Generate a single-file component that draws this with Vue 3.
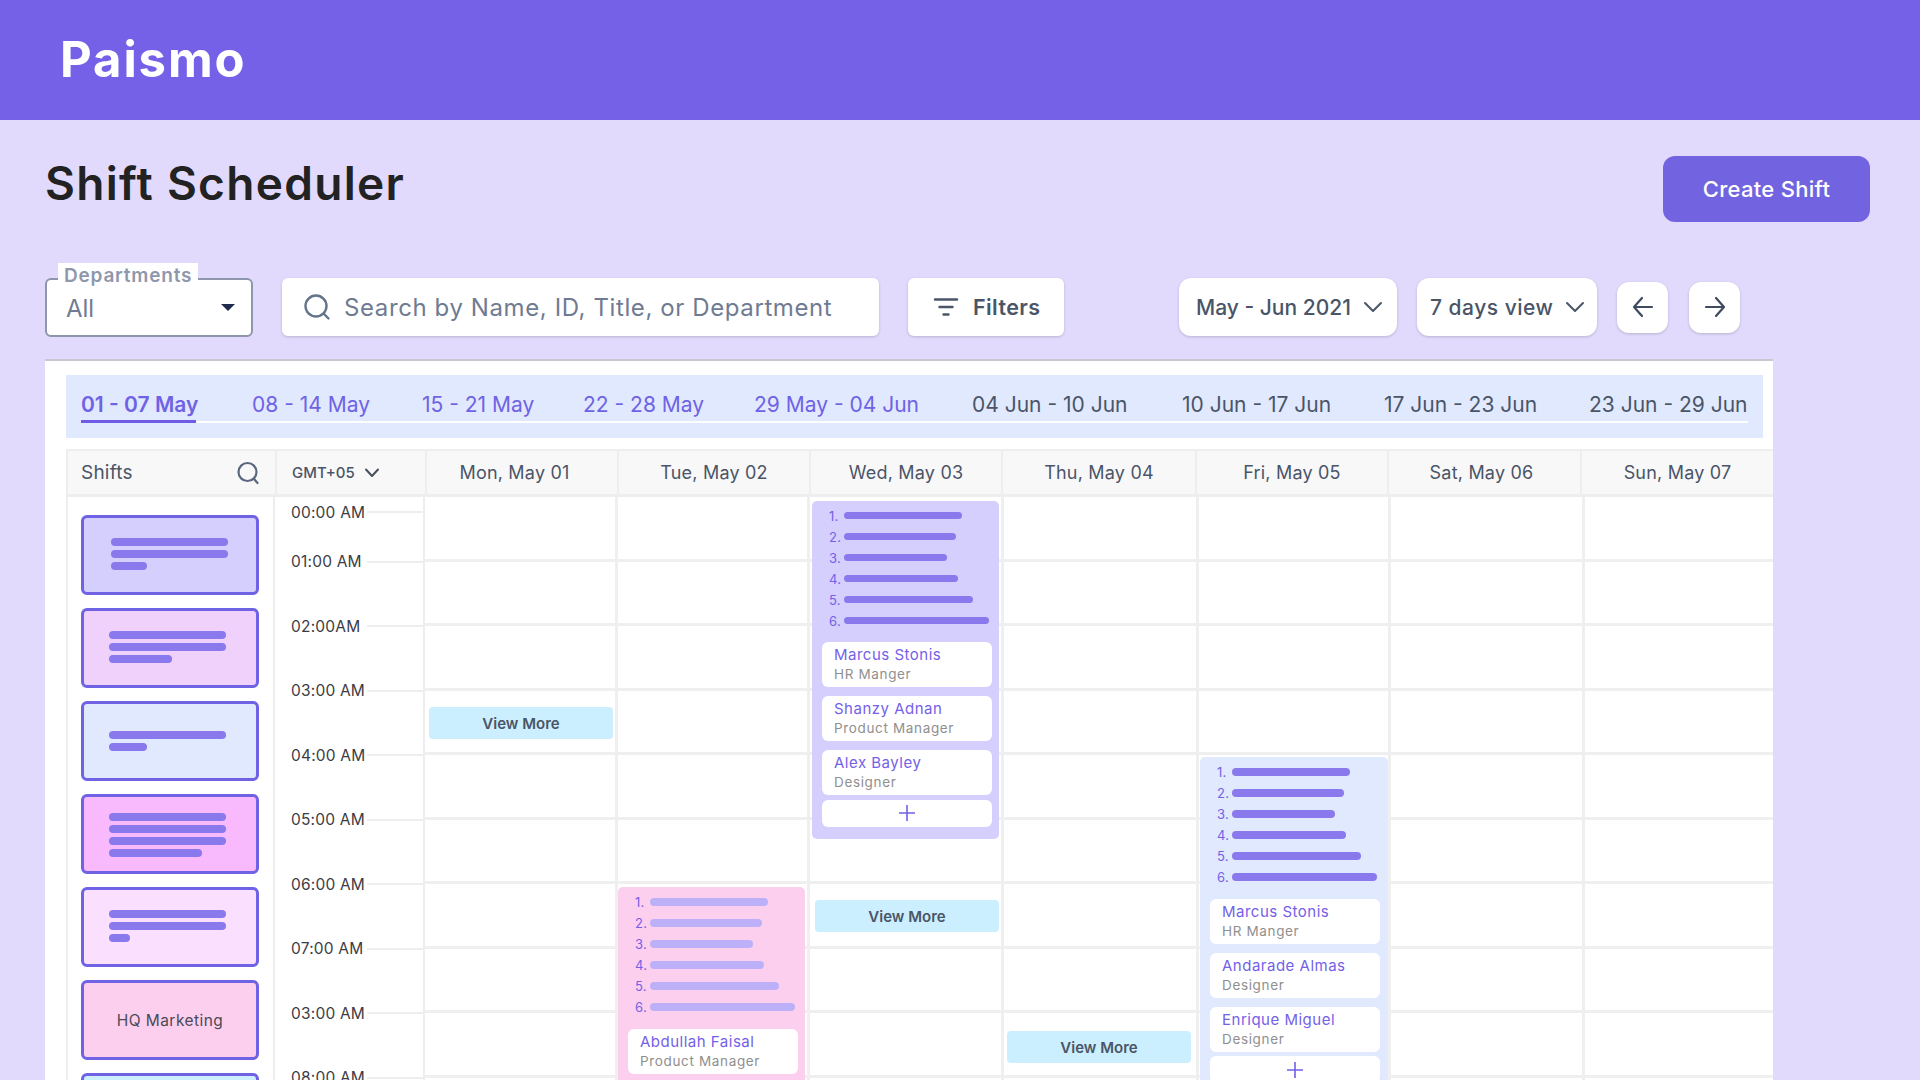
<script setup>
const tabs = [
  { label: '01 - 07 May', width: 115 },
  { label: '08 - 14 May', width: 118 },
  { label: '15 - 21 May', width: 109 },
  { label: '22 - 28 May', width: 119 },
  { label: '29 May - 04 Jun', width: 166 },
  { label: '04 Jun - 10 Jun', width: 158 },
  { label: '10 Jun - 17 Jun', width: 150 },
  { label: '17 Jun - 23 Jun', width: 153 },
  { label: '23 Jun - 29 Jun', width: 156 },
]
const times = ['00:00 AM', '01:00 AM', '02:00AM', '03:00 AM', '04:00 AM', '05:00 AM', '06:00 AM', '07:00 AM', '03:00 AM', '08:00 AM']
const barWidths = [118, 112, 103, 114, 129, 145]

const shifts = [
  { bg: '#d4cffd', lines: [117, 117, 36], pad: 27 },
  { bg: '#f0d1fc', lines: [117, 117, 63], pad: 25 },
  { bg: '#e1e9fe', lines: [117, 38], pad: 25, top: 27 },
  { bg: '#f9b9fd', lines: [117, 117, 117, 93], pad: 25, top: 16 },
  { bg: '#fadffe', lines: [117, 117, 21], pad: 25 },
  { bg: '#fdcfee', label: 'HQ Marketing' },
  { bg: '#ccefff', lines: [] },
]

const days = [
  { name: 'Mon, May 01', more: [{ top: 210, left: 4 }] },
  {
    name: 'Tue, May 02',
    event: {
      top: 390, left: 0, width: 187, bg: '#fdcfee', barColor: '#bcb1f8', height: 240,
      people: [{ name: 'Abdullah Faisal', role: 'Product Manager' }],
    },
  },
  {
    name: 'Wed, May 03',
    more: [{ top: 403, left: 5 }],
    event: {
      top: 3.5, left: 2, width: 187, bg: '#d4cffd', barColor: '#8a79ec', height: 338, plus: true,
      people: [
        { name: 'Marcus Stonis', role: 'HR Manger' },
        { name: 'Shanzy Adnan', role: 'Product Manager' },
        { name: 'Alex Bayley', role: 'Designer' },
      ],
    },
  },
  { name: 'Thu, May 04', more: [{ top: 534, left: 3.5 }] },
  {
    name: 'Fri, May 05',
    event: {
      top: 260, left: 1.5, width: 188, bg: '#e1e9fe', barColor: '#8a79ec', height: 340, plus: true,
      people: [
        { name: 'Marcus Stonis', role: 'HR Manger' },
        { name: 'Andarade Almas', role: 'Designer' },
        { name: 'Enrique Miguel', role: 'Designer' },
      ],
    },
  },
  { name: 'Sat, May 06' },
  { name: 'Sun, May 07' },
]
</script>

<template>
  <div class="page">
    <header class="topbar">
      <span class="logo">Paismo</span>
    </header>

    <main class="content">
      <div class="title-row">
        <h1>Shift Scheduler</h1>
        <button class="create-btn">Create Shift</button>
      </div>

      <div class="toolbar">
        <div class="dept">
          <span class="dept-label">Departments</span>
          <span class="dept-value">All</span>
          <span class="caret"></span>
        </div>
        <div class="search box">
          <svg width="28" height="28" viewBox="0 0 28 28" fill="none" stroke="#64748b" stroke-width="2.4" stroke-linecap="round">
            <circle cx="13" cy="13" r="10.5" />
            <path d="M21 21l4.5 4.5" />
          </svg>
          <span>Search by Name, ID, Title, or Department</span>
        </div>
        <div class="filters box">
          <svg width="26" height="20" viewBox="0 0 26 20" fill="none" stroke="#4a5568" stroke-width="2.4" stroke-linecap="round">
            <path d="M2 2.5h22M6.5 10h13M10.5 17.5h5" />
          </svg>
          <span>Filters</span>
        </div>
        <div class="pill date box">
          <span>May - Jun 2021</span>
          <svg class="chev" width="20" height="12" viewBox="0 0 20 12" fill="none" stroke="#4a5568" stroke-width="2" stroke-linecap="round" stroke-linejoin="round">
            <path d="M2 2l8 8 8-8" />
          </svg>
        </div>
        <div class="pill view box">
          <span>7 days view</span>
          <svg class="chev" width="20" height="12" viewBox="0 0 20 12" fill="none" stroke="#4a5568" stroke-width="2" stroke-linecap="round" stroke-linejoin="round">
            <path d="M2 2l8 8 8-8" />
          </svg>
        </div>
        <div class="arrow-btn">
          <svg width="24" height="22" viewBox="0 0 24 22" fill="none" stroke="#3f4a60" stroke-width="2.2" stroke-linecap="round" stroke-linejoin="round">
            <path d="M21 11H3M11 2l-8 9 8 9" />
          </svg>
        </div>
        <div class="arrow-btn next">
          <svg width="24" height="22" viewBox="0 0 24 22" fill="none" stroke="#3f4a60" stroke-width="2.2" stroke-linecap="round" stroke-linejoin="round">
            <path d="M3 11h18M13 2l8 9-8 9" />
          </svg>
        </div>
      </div>

      <section class="card">
        <div class="tabs">
          <div class="tab-row">
            <span
              v-for="(tab, i) in tabs"
              :key="tab.label"
              :class="['tab', { active: i === 0, later: i > 4 }]"
              :style="{ width: tab.width + 'px' }"
            >{{ tab.label }}</span>
          </div>
        </div>

        <div class="grid-head">
          <div class="head-cell shifts-head">
            <span>Shifts</span>
            <svg width="24" height="24" viewBox="0 0 24 24" fill="none" stroke="#5b6780" stroke-width="2.2" stroke-linecap="round">
              <circle cx="11.5" cy="11" r="9" />
              <path d="M18 18l3.5 4" />
            </svg>
          </div>
          <div class="head-cell gmt">
            <span>GMT+05</span>
            <svg width="16" height="10" viewBox="0 0 16 10" fill="none" stroke="#4a4f5c" stroke-width="2" stroke-linecap="round" stroke-linejoin="round">
              <path d="M2 1.5l6 6.5 6-6.5" />
            </svg>
          </div>
          <div v-for="day in days" :key="day.name" class="head-cell day-head">{{ day.name }}</div>
        </div>

        <div class="grid-body">
          <div class="shift-list">
            <div v-for="(shift, i) in shifts" :key="i" class="shift" :style="{ background: shift.bg, paddingLeft: (shift.pad || 0) + 'px', paddingTop: (shift.top || 20) + 'px' }">
              <span v-if="shift.label" class="shift-label">{{ shift.label }}</span>
              <span v-for="(w, j) in shift.lines" :key="j" class="shift-line" :style="{ width: w + 'px' }"></span>
            </div>
          </div>

          <div class="time-col">
            <div v-for="(t, i) in times" :key="i" class="time-row">
              <span class="time-text">{{ t }}</span>
              <span class="tick"></span>
            </div>
          </div>

          <div v-for="day in days" :key="day.name" class="day-col">
            <div v-for="n in 9" :key="n" class="cell"></div>

            <button v-for="(m, i) in day.more" :key="i" class="view-more" :style="{ top: m.top + 'px', left: m.left + 'px' }">View More</button>

            <div v-if="day.event" class="event" :style="{ top: day.event.top + 'px', left: day.event.left + 'px', width: day.event.width + 'px', height: day.event.height + 'px', background: day.event.bg }">
              <ol class="event-list">
                <li v-for="(w, i) in barWidths" :key="i">
                  <span class="num">{{ i + 1 }}.</span>
                  <span class="bar" :style="{ width: w + 'px', background: day.event.barColor }"></span>
                </li>
              </ol>
              <div class="people">
                <div v-for="p in day.event.people" :key="p.name" class="person">
                  <span class="person-name">{{ p.name }}</span>
                  <span class="person-role">{{ p.role }}</span>
                </div>
                <div v-if="day.event.plus" class="add-person">
                  <svg width="18" height="18" viewBox="0 0 18 18" fill="none" stroke="#6f62e4" stroke-width="1.6">
                    <path d="M9 1v16M1 9h16" />
                  </svg>
                </div>
              </div>
            </div>
          </div>
        </div>
      </section>
    </main>
  </div>
</template>

<style>
html, body {
  margin: 0;
  overflow: hidden;
}
</style>

<style scoped>
.page {
  height: 1080px;
  overflow: hidden;
  background: #e1dafd;
  font-family: Inter, 'Liberation Sans', sans-serif;
  color: #4a5568;
}

.topbar {
  height: 120px;
  background: #7461e8;
  display: flex;
  align-items: center;
  padding: 0 0 1px 60px;
  box-sizing: border-box;
}

.logo {
  color: #fff;
  font-size: 49px;
  font-weight: 700;
  letter-spacing: 1.9px;
}

.content {
  padding: 36px 50px 0 45px;
}

.title-row {
  display: flex;
  align-items: flex-start;
  justify-content: space-between;
  height: 66px;
}

h1 {
  margin: 0;
  font-size: 46px;
  line-height: 54px;
  font-weight: 600;
  letter-spacing: 1.3px;
  color: #222;
}

.create-btn {
  width: 207px;
  height: 66px;
  border: none;
  border-radius: 12px;
  background: #7264e0;
  color: #fff;
  font-family: inherit;
  font-size: 22px;
  font-weight: 500;
  letter-spacing: 0.3px;
}

.toolbar {
  display: flex;
  align-items: center;
  margin-top: 56px;
  height: 58px;
}

.box {
  background: #fff;
  box-shadow: 0 1px 3px rgba(0, 0, 0, 0.18);
  height: 58px;
  box-sizing: border-box;
  display: flex;
  align-items: center;
}

.dept {
  position: relative;
  width: 208px;
  height: 59px;
  box-sizing: border-box;
  background: #fff;
  border: 2px solid #8d96ab;
  border-radius: 6px;
  display: flex;
  align-items: center;
  justify-content: space-between;
  padding: 0 16px 0 19px;
}

.dept-label {
  position: absolute;
  left: 11px;
  top: -17px;
  background: #fff;
  padding: 0 6px 0 6px;
  height: 25px;
  font-size: 19px;
  line-height: 26px;
  font-weight: 600;
  letter-spacing: 0.8px;
  color: #8f97ac;
}

.dept-value {
  font-size: 24px;
  color: #6f7b92;
  margin-top: 3px;
}

.caret {
  border-left: 7px solid transparent;
  border-right: 7px solid transparent;
  border-top: 7px solid #1e2b4d;
}

.search {
  width: 597px;
  margin-left: 29px;
  border-radius: 6px;
  padding-left: 21px;
  gap: 13px;
  font-size: 24px;
  letter-spacing: 0.6px;
  color: #6f7b92;
}

.filters {
  width: 156px;
  margin-left: 29px;
  border-radius: 6px;
  padding-left: 25px;
  gap: 14px;
  font-size: 21.5px;
  letter-spacing: 0.4px;
  font-weight: 600;
}

.pill {
  border-radius: 12px;
  font-size: 21px;
  font-weight: 500;
  justify-content: space-between;
  padding: 0 14px 0 17px;
}

.date {
  width: 218px;
  margin-left: 115px;
}

.view {
  width: 180px;
  margin-left: 20px;
  padding: 0 12px 0 13px;
  letter-spacing: 0.5px;
}

.arrow-btn {
  width: 51px;
  height: 51px;
  margin-left: 20px;
  background: #fff;
  border-radius: 12px;
  box-shadow: 0 1px 3px rgba(0, 0, 0, 0.18);
  display: flex;
  align-items: center;
  justify-content: center;
}

.arrow-btn.next {
  margin-left: 21px;
}

.card {
  width: 1728px;
  box-sizing: border-box;
  margin-top: 23px;
  background: #fff;
  border-top: 2px solid #c8c8d0;
  padding: 14px 0 0 21px;
}

.tabs {
  height: 63px;
  margin-right: 10px;
  background: #e1e9fe;
  padding: 0 15px;
}

.tab-row {
  display: flex;
  gap: 52px;
  height: 48px;
  box-sizing: border-box;
  border-bottom: 2px solid #fff;
  align-items: flex-end;
}

.tab {
  display: block;
  flex: none;
  font-size: 21px;
  line-height: 37px;
  height: 37px;
  white-space: nowrap;
  color: #6f62e4;
  margin-bottom: -2px;
  box-sizing: border-box;
}

.tab.active {
  font-weight: 600;
  border-bottom: 3px solid #6f5be6;
  margin-right: 4px;
}

.tab.later {
  color: #4a5568;
}

.grid-head,
.grid-body {
  display: grid;
}

.grid-head {
  grid-template-columns: 209px 150px 192px 192px 192px 194px 192px 193px 1fr;
  margin-top: 11px;
  height: 48px;
  box-sizing: border-box;
  border-top: 2px solid #eee;
  border-bottom: 3px solid #eee;
  border-left: 2px solid #eee;
  background: #f8f8f8;
  font-size: 18px;
  letter-spacing: 0.2px;
}

.grid-body {
  grid-template-columns: 209px 150px 193px 192px 193.5px 195px 192.5px 193.5px 1fr;
  height: 600px;
  overflow: hidden;
}

.head-cell {
  display: flex;
  align-items: center;
  border-right: 2px solid #eee;
  min-width: 0;
}

.shifts-head {
  justify-content: space-between;
  padding: 0 15px 0 13px;
  font-size: 19px;
}

.gmt {
  padding-left: 15px;
  gap: 9px;
  font-size: 15px;
  letter-spacing: 0;
  font-weight: 500;
}

.day-head {
  justify-content: center;
  white-space: nowrap;
}

.day-head:nth-child(3) {
  padding-right: 15px;
  box-sizing: border-box;
}

.day-head:nth-child(8) {
  padding-right: 6px;
  box-sizing: border-box;
}

.day-head:last-child {
  border-right: none;
}

.shift-list {
  border-left: 2px solid #eee;
  border-right: 2px solid #eee;
  padding: 18px 0 0 13px;
  display: flex;
  flex-direction: column;
  gap: 13px;
}

.shift {
  flex: none;
  width: 178px;
  height: 80px;
  box-sizing: border-box;
  border: 3px solid #6f62e4;
  border-radius: 6px;
  display: flex;
  flex-direction: column;
  gap: 4px;
}

.shift-line {
  display: block;
  height: 8px;
  border-radius: 4px;
  background: #8a79ec;
}

.shift-label {
  align-self: center;
  margin-top: 3px;
  font-size: 15.5px;
  line-height: 30px;
  color: #4a4a55;
  letter-spacing: 0.45px;
}

.time-col {
  border-right: 2px solid #eee;
  padding-top: 3px;
}

.time-row {
  display: flex;
  align-items: center;
  justify-content: space-between;
  height: 24px;
  margin-bottom: 40.5px;
  padding-left: 16px;
  box-sizing: border-box;
}

.time-row:first-child {
  margin-bottom: 25.5px;
}

.time-text {
  font-size: 15.5px;
  color: #3c3c44;
  letter-spacing: 0.2px;
  white-space: nowrap;
}

.tick {
  width: 56px;
  height: 2px;
  background: #eee;
}

.day-col {
  position: relative;
  min-width: 0;
  border-right: 3px solid #efefef;
}

.day-col:last-child {
  border-right: none;
}

.cell {
  height: 64.5px;
  box-sizing: border-box;
  border-bottom: 3px solid #efefef;
}

.view-more {
  position: absolute;
  width: 184px;
  height: 32px;
  border: none;
  border-radius: 4px;
  background: #ccefff;
  color: #4a5568;
  font-family: inherit;
  font-size: 15px;
  font-weight: 600;
}

.event {
  position: absolute;
  box-sizing: border-box;
  border-radius: 5px;
  padding-top: 4.5px;
}

.event-list {
  list-style: none;
  margin: 0;
  padding: 0;
}

.event-list li {
  display: flex;
  align-items: center;
  height: 21px;
  padding-left: 17px;
}

.num {
  width: 15px;
  font-size: 13px;
  letter-spacing: 0.3px;
  color: #7461e8;
}

.bar {
  display: block;
  height: 7.5px;
  border-radius: 4px;
}

.people {
  margin: 11px 0 0 10px;
  width: 170px;
  display: flex;
  flex-direction: column;
  gap: 9px;
}

.person {
  height: 45px;
  box-sizing: border-box;
  background: #fff;
  border-radius: 6px;
  padding: 3px 0 0 12px;
}

.person-name {
  display: block;
  font-size: 15px;
  line-height: 20px;
  font-weight: 400;
  letter-spacing: 0.5px;
  color: #7461e8;
  white-space: nowrap;
}

.person-role {
  display: block;
  font-size: 13.5px;
  line-height: 19px;
  letter-spacing: 0.65px;
  color: #8f8f8f;
  white-space: nowrap;
}

.add-person {
  height: 27px;
  margin-top: -4.5px;
  background: #fff;
  border-radius: 6px;
  display: flex;
  align-items: center;
  justify-content: center;
}
</style>
